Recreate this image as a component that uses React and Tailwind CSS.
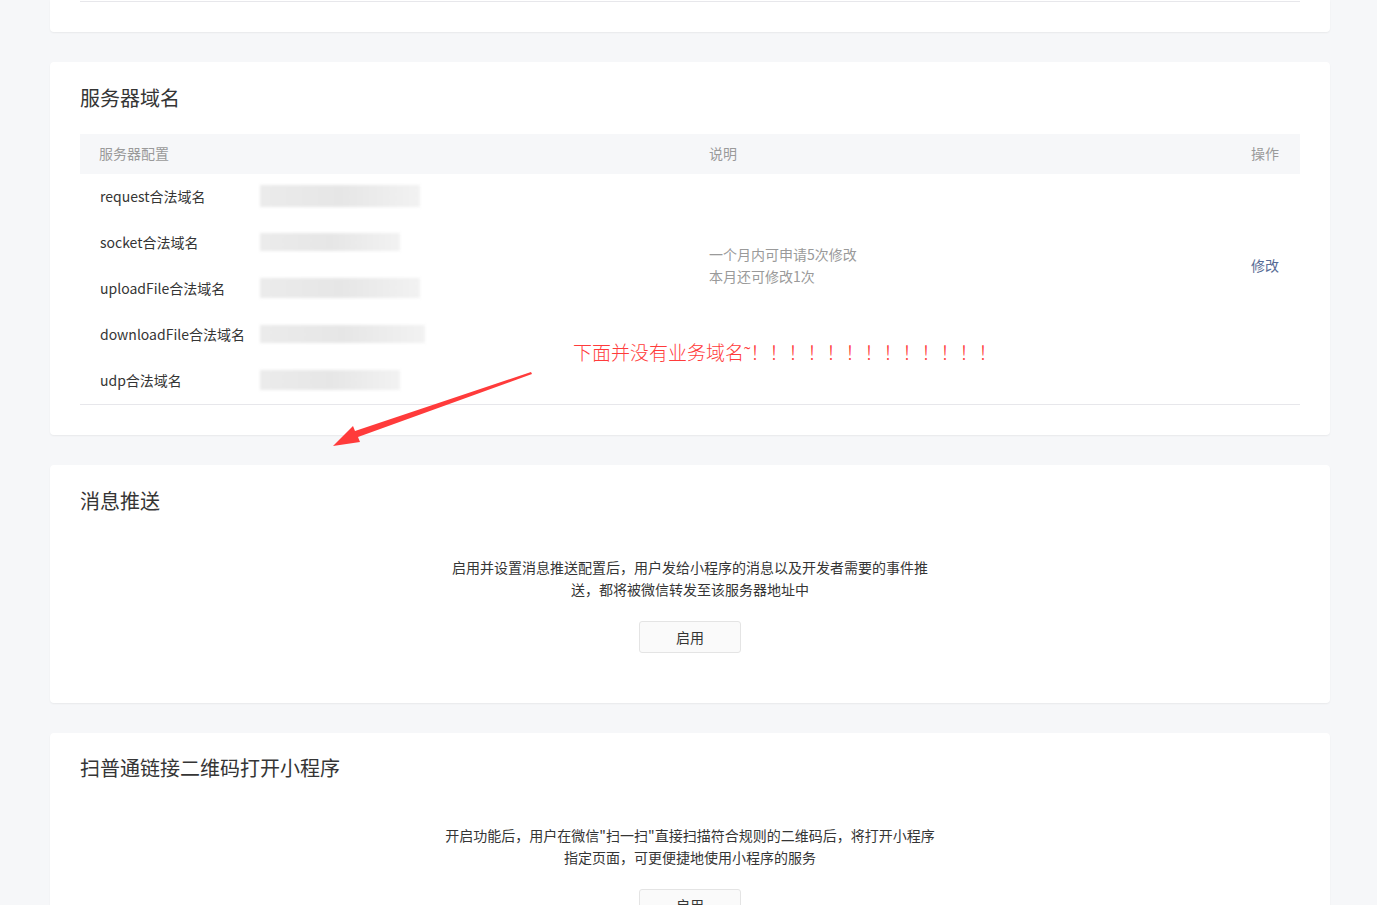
import React from 'react';

const font = { fontFamily: '"Noto Sans CJK SC", "Noto Sans", sans-serif' };

const domainRows = [
    { label: 'request合法域名', blur: 'w-[160px] h-[22px]' },
    { label: 'socket合法域名', blur: 'w-[140px] h-[18px]' },
    { label: 'uploadFile合法域名', blur: 'w-[160px] h-[20px]' },
    { label: 'downloadFile合法域名', blur: 'w-[165px] h-[18px]' },
    { label: 'udp合法域名', blur: 'w-[140px] h-[20px]' },
];

const Card = ({ className = '', children }) => (
    <div className={`w-[1280px] bg-white rounded-[4px] shadow-[0_1px_2px_rgba(0,0,0,0.06)] ${className}`}>
        {children}
    </div>
);

const EnableBlock = ({ lines }) => (
    <div className="flex flex-col items-center">
        <p className="text-[14px] leading-[22px] text-[#353535] text-center">
            {lines[0]}<br />{lines[1]}
        </p>
        <button className="mt-[21px] w-[102px] h-[32px] rounded-[3px] border border-[#e4e4e4] bg-[#fafafa] text-[14px] text-[#353535]">
            启用
        </button>
    </div>
);

const App = () => {
    return (
        <div className="min-h-screen bg-[#f6f7f9] pl-[50px] pb-[60px] overflow-hidden" style={font}>
            {/* tail of the previous card */}
            <Card className="px-[30px] pt-[1px] pb-[30px] rounded-t-none">
                <div className="border-t border-[#e7e7eb]" />
            </Card>

            {/* 服务器域名 */}
            <Card className="relative mt-[30px] px-[30px] pt-[22px] pb-[30px]">
                <h2 className="text-[20px] leading-[28px] text-[#353535]">服务器域名</h2>
                <div className="mt-[22px]">
                    <div className="flex items-center h-[40px] bg-[#f6f7f9] pl-[19px] pr-[21px] pb-[1px] text-[14px] text-[#9a9a9a]">
                        <div className="w-[610px]">服务器配置</div>
                        <div className="flex-1">说明</div>
                        <div>操作</div>
                    </div>
                    <div className="flex pl-[20px] pr-[21px] border-b border-[#e7e7eb]">
                        <div className="w-[609px]">
                            {domainRows.map((row) => (
                                <div key={row.label} className="flex items-center h-[46px] pb-[2px] text-[14px] text-[#353535]">
                                    <div className="w-[160px] shrink-0 whitespace-nowrap">{row.label}</div>
                                    <div className={`${row.blur} bg-gradient-to-r from-[#ebebeb] via-[#e6e6e6] to-[#f2f2f2] blur-[1.5px]`} />
                                </div>
                            ))}
                        </div>
                        <div className="flex-1 pt-[69px] text-[14px] leading-[22px] text-[#9a9a9a]">
                            <div>一个月内可申请5次修改</div>
                            <div>本月还可修改1次</div>
                        </div>
                        <div className="pt-[80px] text-[14px] leading-[22px] text-[#576b95]">修改</div>
                    </div>
                </div>

                {/* red annotation */}
                <div
                    className="absolute left-[523px] top-[277px] text-[19px] leading-[26px] text-[#ff3b3b] whitespace-nowrap"
                    style={{ fontFamily: '"Noto Sans CJK SC", serif', fontWeight: 300 }}
                >
                    下面并没有业务域名˜！！！！！！！！！！！！！
                </div>
                <svg className="absolute left-[270px] top-[300px]" width="230" height="95" viewBox="0 0 230 95">
                    <polygon points="211,10 212,12 38,75 40,80 13,84 33,64 35,69" fill="#ff3b3b" />
                </svg>
            </Card>

            {/* 消息推送 */}
            <Card className="mt-[30px] px-[30px] pt-[22px] pb-[50px]">
                <h2 className="text-[20px] leading-[28px] text-[#353535]">消息推送</h2>
                <div className="mt-[41px]">
                    <EnableBlock lines={['启用并设置消息推送配置后，用户发给小程序的消息以及开发者需要的事件推', '送，都将被微信转发至该服务器地址中']} />
                </div>
            </Card>

            {/* 扫普通链接二维码打开小程序 */}
            <Card className="mt-[30px] px-[30px] pt-[21px] pb-[50px]">
                <h2 className="text-[20px] leading-[28px] text-[#353535]">扫普通链接二维码打开小程序</h2>
                <div className="mt-[42px]">
                    <EnableBlock lines={['开启功能后，用户在微信"扫一扫"直接扫描符合规则的二维码后，将打开小程序', '指定页面，可更便捷地使用小程序的服务']} />
                </div>
            </Card>
        </div>
    );
};

export default App;
